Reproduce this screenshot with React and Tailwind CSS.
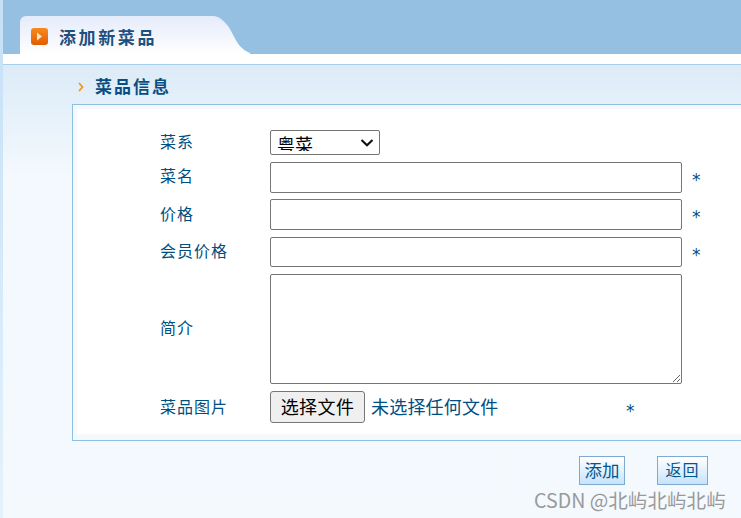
import React from 'react';

const cjk = { fontFamily: '"Noto Sans CJK SC", sans-serif' };

function Star({ className }) {
  return (
    <span className={`text-[17px] leading-none text-[#00507f] ${className}`} style={{ fontFamily: '"DejaVu Sans", sans-serif' }}>*</span>
  );
}

function Row({ label, children, star, className, labelClass }) {
  return (
    <div className={`flex items-center ${className}`}>
      <label className={`w-[110px] shrink-0 text-[16px] tracking-[1px] text-[#00507f] ${labelClass}`}>{label}</label>
      {children}
      {star ? <Star className="ml-[10px] mt-[6px]" /> : null}
    </div>
  );
}

const inputClass = 'block w-[412px] rounded-[2px] border border-[#767676] bg-white';

export default function App() {
  return (
    <div className="relative flex h-[518px] w-[741px] overflow-hidden bg-white" style={cjk}>
      <div className="w-[3px] shrink-0 bg-gradient-to-b from-[#c5e0f6] to-[#e3f2fd]" />
      <div className="flex min-w-0 flex-1 flex-col">
        {/* Top bar */}
        <header className="flex h-[54px] shrink-0 items-end bg-[#95c0e2] pl-[17px]">
          <div className="flex h-[38px] items-end">
            <div className="flex h-[38px] w-[192px] items-center rounded-tl-[6px] bg-gradient-to-b from-[#e4ebfa] to-white pl-[11px]">
              <span className="mt-[3px] flex h-[17px] w-[17px] items-center justify-center rounded-[3px] bg-gradient-to-b from-[#f78a1e] to-[#e25c00]">
                <svg width="7" height="9" viewBox="0 0 7 9"><path d="M1 0.5 L6 4.5 L1 8.5 Z" fill="#fde4c4" /></svg>
              </span>
              <h1 className="ml-[11px] mt-[3px] whitespace-nowrap text-[17px] font-bold tracking-[2.6px] text-[#1d4f80]">添加新菜品</h1>
            </div>
            <svg width="40" height="38" viewBox="0 0 40 38" className="-ml-px block">
              <defs>
                <linearGradient id="tab" x1="0" y1="0" x2="0" y2="1">
                  <stop offset="0" stopColor="#e4ebfa" />
                  <stop offset="1" stopColor="#ffffff" />
                </linearGradient>
              </defs>
              <path d="M0 0 H3 C9 1 13 5 17 10 C22 17 25 27 31 32 C34 35 37 36 39 37 V38 H0 Z" fill="url(#tab)" />
            </svg>
          </div>
        </header>
        <div className="h-[10px] shrink-0 bg-white" />
        <div className="h-px shrink-0 bg-[#a5d0ee]" />

        {/* Main */}
        <main className="flex-1 bg-gradient-to-b from-[#dcebf7] from-0% via-[#f4f9fe] via-25% to-[#f4f9fe] pl-[69px]">
          <div className="flex h-[39px] items-center">
            <svg width="6" height="10" viewBox="0 0 6 10" className="ml-[6px] mt-[5px]">
              <path d="M1 1 L4.5 5 L1 9" fill="none" stroke="#f7931e" strokeWidth="1.8" />
            </svg>
            <h2 className="ml-[11px] mt-[2px] whitespace-nowrap text-[17px] font-bold tracking-[2px] text-[#0a4f82]">菜品信息</h2>
          </div>

          <div className="h-[337px] w-[720px] border border-[#8fc0e4] bg-[#f4f9fe] pl-[4px] pt-[4px]">
            <form className="h-[325px] bg-white pl-[83px] pt-[21px]">
              <Row label="菜系" className="h-[25px]" labelClass="-mt-[4px]">
                <div className="relative">
                  <select className="block h-[25px] w-[110px] appearance-none rounded-[2px] border border-[#767676] bg-white pb-[3px] pl-[6px] text-[18px] text-black">
                    <option>粤菜</option>
                  </select>
                  <svg width="14" height="8" viewBox="0 0 14 8" className="pointer-events-none absolute right-[6px] top-[9px]">
                    <path d="M1.5 1 L7 6.2 L12.5 1" fill="none" stroke="#111111" strokeWidth="2.2" />
                  </svg>
                </div>
              </Row>
              <Row label="菜名" star className="mt-[7px] h-[31px]" labelClass="-mt-[6px]">
                <input type="text" className={`${inputClass} h-[31px]`} />
              </Row>
              <Row label="价格" star className="mt-[6px] h-[31px]" labelClass="-mt-[4px]">
                <input type="text" className={`${inputClass} h-[31px]`} />
              </Row>
              <Row label="会员价格" star className="mt-[7px] h-[30px]" labelClass="-mt-[4px]">
                <input type="text" className={`${inputClass} h-[30px]`} />
              </Row>
              <Row label="简介" className="mt-[7px] h-[110px]" labelClass="-mt-[4px]">
                <textarea className={`${inputClass} h-[110px]`} />
              </Row>
              <Row label="菜品图片" className="mt-[7px] h-[32px]" labelClass="-mt-[2px]">
                <button type="button" className="h-[32px] w-[95px] rounded-[3px] border border-[#767676] bg-[#efefef] pb-[2px] text-[18px] tracking-[0.4px] text-black">选择文件</button>
                <span className="-mt-[2px] ml-[6px] w-[255px] whitespace-nowrap text-[18px] tracking-[0.2px] text-[#00507f]">未选择任何文件</span>
                <Star className="mt-[8px]" />
              </Row>
            </form>
          </div>

          {/* Actions */}
          <div className="mt-[15px] flex items-start pl-[507px]">
            <button className="h-[29px] w-[46px] border border-[#7fa9cf] bg-gradient-to-b from-white to-[#c6e3fb] pb-[4px] text-[17.5px] text-[#00568f]">添加</button>
            <button className="ml-[32px] h-[29px] w-[51px] border border-[#7fa9cf] bg-gradient-to-b from-white to-[#c6e3fb] pb-[8px] text-[16px] tracking-[1px] text-[#00568f]">返回</button>
          </div>
        </main>
      </div>

      {/* Watermark */}
      <span className="absolute left-[534px] top-[485px] whitespace-nowrap text-[19.6px] text-[#9a9a9a]">CSDN @北屿北屿北屿</span>
    </div>
  );
}
